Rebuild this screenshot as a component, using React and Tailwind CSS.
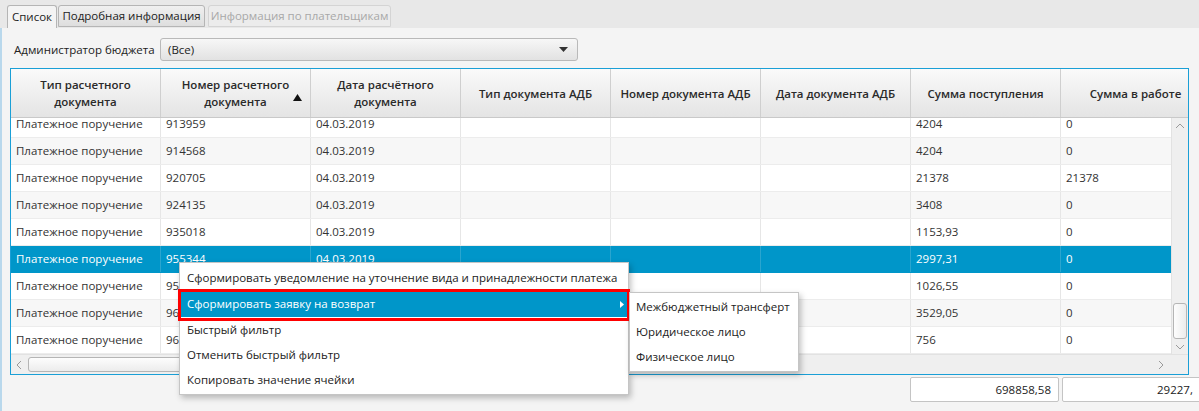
import React from 'react';

const columns = [
  ['Тип расчетного', 'документа'],
  ['Номер расчетного', 'документа'],
  ['Дата расчётного', 'документа'],
  ['Тип документа АДБ'],
  ['Номер документа АДБ'],
  ['Дата документа АДБ'],
  ['Сумма поступления'],
  ['Сумма в работе'],
];

const rows = [
  { num: '913959', sum: '4204', work: '0' },
  { num: '914568', sum: '4204', work: '0' },
  { num: '920705', sum: '21378', work: '21378' },
  { num: '924135', sum: '3408', work: '0' },
  { num: '935018', sum: '1153,93', work: '0' },
  { num: '955344', sum: '2997,31', work: '0', selected: true },
  { num: '958120', sum: '1026,55', work: '0' },
  { num: '961437', sum: '3529,05', work: '0' },
  { num: '966015', sum: '756', work: '0' },
];

const menuItems = [
  'Сформировать уведомление на уточнение вида и принадлежности платежа',
  'Сформировать заявку на возврат',
  'Быстрый фильтр',
  'Отменить быстрый фильтр',
  'Копировать значение ячейки',
];

const subItems = ['Межбюджетный трансферт', 'Юридическое лицо', 'Физическое лицо'];

const Chevron = ({ dir }) => {
  const d = {
    up: 'M1 6 L5 2 L9 6',
    down: 'M1 2 L5 6 L9 2',
    left: 'M6 1 L2 5 L6 9',
    right: 'M2 1 L6 5 L2 9',
  }[dir];
  const vertical = dir === 'up' || dir === 'down';
  return (
    <svg width={vertical ? 10 : 8} height={vertical ? 8 : 10} viewBox={vertical ? '0 0 10 8' : '0 0 8 10'}>
      <path d={d} fill="none" stroke="#9a9a9a" strokeWidth="1" />
    </svg>
  );
};

const App = () => {
  return (
    <div className="relative w-[1199px] h-[411px] overflow-hidden whitespace-nowrap bg-[#f4f4f4] text-[11.5px] text-[#333] font-['Open_Sans','Noto_Sans',sans-serif]">
      {/* tab strip */}
      <div className="h-[28px] bg-[#e8e8e8] flex items-end pl-[7px]">
        <div className="h-[23px] w-[50px] flex items-center justify-center bg-[#f4f4f4] border border-b-0 border-[#b5b5b5] rounded-t-[3px] text-[#222]">
          Список
        </div>
        <div className="h-[22px] ml-[1px] mb-[1px] w-[147px] flex items-center justify-center bg-gradient-to-b from-[#f0f0f0] to-[#dedede] border border-[#b5b5b5] rounded-t-[3px] text-[#222]">
          Подробная информация
        </div>
        <div className="h-[22px] ml-[3px] mb-[1px] w-[183px] flex items-center justify-center bg-[#ececec] border border-[#d4d4d4] rounded-t-[3px] text-[#a8a8a8]">
          Информация по плательщикам
        </div>
      </div>

      {/* content */}
      <div className="h-[383px] border-l-2 border-[#b9d8ec] pl-[8px] flex flex-col">
        <div className="flex items-center mt-[10px] h-[23px]">
          <span className="ml-[4px] w-[146px] text-[#222]">Администратор бюджета</span>
          <div className="w-[418px] h-[23px] flex items-center justify-between px-[7px] rounded-[3px] border border-[#b9b9b9] bg-gradient-to-b from-[#f7f7f7] to-[#e2e2e2] text-[#222]">
            <span>(Все)</span>
            <svg width="9" height="5" viewBox="0 0 9 5" className="mr-[2px]">
              <path d="M0 0 L9 0 L4.5 5 Z" fill="#333" />
            </svg>
          </div>
        </div>

        {/* table */}
        <div className="mt-[7px] w-[1179px] h-[307px] border border-[#1a9fd6] bg-white flex flex-col overflow-hidden">
          {/* header */}
          <div className="h-[49px] flex shrink-0 bg-gradient-to-b from-[#fafafa] to-[#e4e4e4] border-b border-[#c9c9c9] overflow-hidden">
            {columns.map((lines, i) => (
              <div
                key={i}
                className="relative w-[150px] shrink-0 flex flex-col items-center justify-center border-r border-[#cfcfcf] font-semibold text-[#2a2a2a] leading-[17px]"
              >
                {lines.map((l) => (
                  <span key={l}>{l}</span>
                ))}
                {i === 1 && (
                  <svg width="9" height="7" viewBox="0 0 9 7" className="absolute right-[8px] top-[25px]">
                    <path d="M4.5 0 L9 7 L0 7 Z" fill="#111" />
                  </svg>
                )}
              </div>
            ))}
          </div>

          {/* body + vertical scrollbar */}
          <div className="flex h-[236px] shrink-0">
            <div className="w-[1160px] overflow-hidden">
              <div className="-mt-[7px]">
                {rows.map((r, idx) => (
                  <div
                    key={r.num}
                    className={`h-[27px] flex border-b ${
                      r.selected
                        ? 'bg-[#0096c9] text-white border-[#0096c9]'
                        : idx % 2 === 1
                        ? 'bg-[#f7f7f7] border-[#ececec]'
                        : 'bg-white border-[#ececec]'
                    }`}
                  >
                    {['Платежное поручение', r.num, '04.03.2019', '', '', '', r.sum, r.work].map((v, ci) => (
                      <div
                        key={ci}
                        className={`w-[150px] shrink-0 flex items-center pl-[5px] border-r ${
                          r.selected ? 'border-[#2aa5cf]' : 'border-[#e6e6e6]'
                        }`}
                      >
                        {v}
                      </div>
                    ))}
                  </div>
                ))}
              </div>
            </div>
            <div className="w-[17px] bg-[#efefef] border-l border-[#e2e2e2] flex flex-col items-center justify-between pt-[4px] pb-[3px]">
              <Chevron dir="up" />
              <div className="flex flex-col items-center gap-[4px]">
                <div className="w-[14px] h-[36px] rounded-[3px] border border-[#b5b5b5] bg-gradient-to-r from-[#fdfdfd] to-[#ececec]" />
                <Chevron dir="down" />
              </div>
            </div>
          </div>

          {/* horizontal scrollbar */}
          <div className="h-[20px] flex shrink-0 bg-[#efefef] border-t border-[#e2e2e2]">
            <div className="w-[1160px] flex items-center pl-[4px] pr-[6px] justify-between">
              <div className="flex items-center gap-[5px]">
                <Chevron dir="left" />
                <div className="w-[540px] h-[15px] rounded-[3px] border border-[#b5b5b5] bg-gradient-to-b from-[#fdfdfd] to-[#ececec]" />
              </div>
              <Chevron dir="right" />
            </div>
            <div className="w-[17px]" />
          </div>
        </div>

        {/* totals */}
        <div className="flex mt-[2px] pl-[900px] gap-[3px]">
          <div className="w-[149px] h-[25px] shrink-0 bg-white border border-[#c4c4c4] rounded-[2px] flex items-center justify-end pr-[7px] text-[#222]">
            698858,58
          </div>
          <div className="w-[150px] h-[25px] shrink-0 bg-white border border-[#c4c4c4] rounded-[2px] flex items-center pl-[94px] text-[#222]">
            29227,
          </div>
        </div>
      </div>

      {/* context menu */}
      <div className="absolute left-[179px] top-[262px] w-[450px] h-[133px] bg-white border border-[#c5c5c5] shadow-[2px_3px_6px_rgba(0,0,0,0.25)] pt-[2px]">
        {menuItems.map((m, i) => (
          <div
            key={m}
            className={`flex items-center justify-between pl-[7px] pr-[4px] ${
              i === 1 ? 'bg-[#0096c9] text-white h-[26px] mt-[1px]' : 'h-[25px] text-[#222]'
            }`}
          >
            <span>{m}</span>
            {i === 1 && (
              <svg width="4" height="7" viewBox="0 0 4 7">
                <path d="M0 0 L4 3.5 L0 7 Z" fill="#fff" />
              </svg>
            )}
          </div>
        ))}
      </div>
      <div className="absolute left-[178px] top-[289px] w-[452px] h-[32px] border-[3px] border-[#ff0000]" />

      {/* submenu */}
      <div className="absolute left-[629px] top-[292px] w-[170px] h-[80px] bg-white border border-[#c5c5c5] shadow-[2px_3px_6px_rgba(0,0,0,0.25)] pt-[1px]">
        {subItems.map((s) => (
          <div key={s} className="h-[25px] flex items-center pl-[6px] text-[#222]">
            {s}
          </div>
        ))}
      </div>
    </div>
  );
};

export default App;
